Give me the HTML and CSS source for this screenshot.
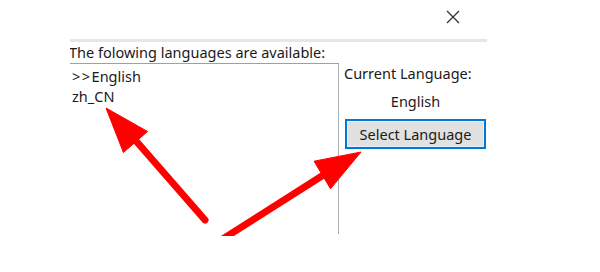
FILE: index.html
```html
<!DOCTYPE html>
<html>
<head>
<meta charset="utf-8">
<link rel="stylesheet" href="styles.css">
</head>
<body>
<div class="titlebar">
  <svg class="close" width="14" height="14" viewBox="0 0 14 14"><path d="M1 1 L13 13 M13 1 L1 13" stroke="#333" stroke-width="1.3" fill="none"/></svg>
</div>
<div class="dialog">
  <div class="rule"></div>
  <div class="caption">The folowing languages are available:</div>
  <div class="main">
    <div class="listbox">
      <div class="item"><span class="marker">&gt;&gt;</span>English</div>
      <div class="item">zh_CN</div>
    </div>
    <div class="side">
      <div class="label">Current Language:</div>
      <div class="current">English</div>
      <button class="select">Select Language</button>
    </div>
  </div>
</div>
<svg class="arrows" width="600" height="236" viewBox="0 0 600 236">
  <g fill="#ff0000" stroke="#ff0000">
    <line x1="205" y1="220" x2="130" y2="134" stroke-width="7" stroke-linecap="round"/>
    <polygon points="106,108 147.6,131.5 123.4,152.5" stroke-width="1" stroke-linejoin="round"/>
    <line x1="218" y1="242" x2="325" y2="174" stroke-width="7"/>
    <polygon points="361,152 330.5,188.8 314.1,161.2" stroke-width="1" stroke-linejoin="round"/>
  </g>
</svg>
</body>
</html>
```

FILE: styles.css
```css
html, body {
  margin: 0;
  padding: 0;
  background: #ffffff;
}
body {
  width: 600px;
  height: 272px;
  position: relative;
  overflow: hidden;
  font-family: "Noto Sans", "Open Sans", sans-serif;
  font-size: 14.5px;
  color: #1a1a1a;
}
.titlebar {
  height: 39px;
  position: relative;
}
.close {
  position: absolute;
  left: 446px;
  top: 10px;
}
.dialog {
  margin-left: 70px;
  width: 417px;
  overflow: hidden;
}
.rule {
  height: 3px;
  background: #e6e6e6;
}
.caption {
  height: 21px;
  line-height: 20px;
  margin-left: -1px;
  white-space: nowrap;
}
.main {
  display: flex;
}
.listbox {
  width: 269px;
  height: 171px;
  border-top: 1px solid #a0a0a0;
  border-right: 1px solid #a6adb5;
  padding-top: 2px;
  padding-left: 2px;
  box-sizing: border-box;
}
.item {
  line-height: 20px;
  white-space: nowrap;
}
.marker {
  letter-spacing: 1.5px;
}
.side {
  flex: 1;
  padding-left: 5px;
  display: flex;
  flex-direction: column;
}
.label {
  line-height: 20px;
  white-space: nowrap;
}
.current {
  line-height: 20px;
  margin-top: 8px;
  text-align: center;
}
.select {
  margin-top: 8px;
  margin-left: 1px;
  width: 141px;
  height: 30px;
  border: 2px solid #0078d7;
  box-shadow: inset 0 0 0 1px #e8f1fa;
  background: #e1e1e1;
  font-family: "Noto Sans", "Open Sans", sans-serif;
  font-size: 14.5px;
  color: #1a1a1a;
  padding: 0;
}
.arrows {
  position: absolute;
  left: 0;
  top: 0;
  pointer-events: none;
}
```
